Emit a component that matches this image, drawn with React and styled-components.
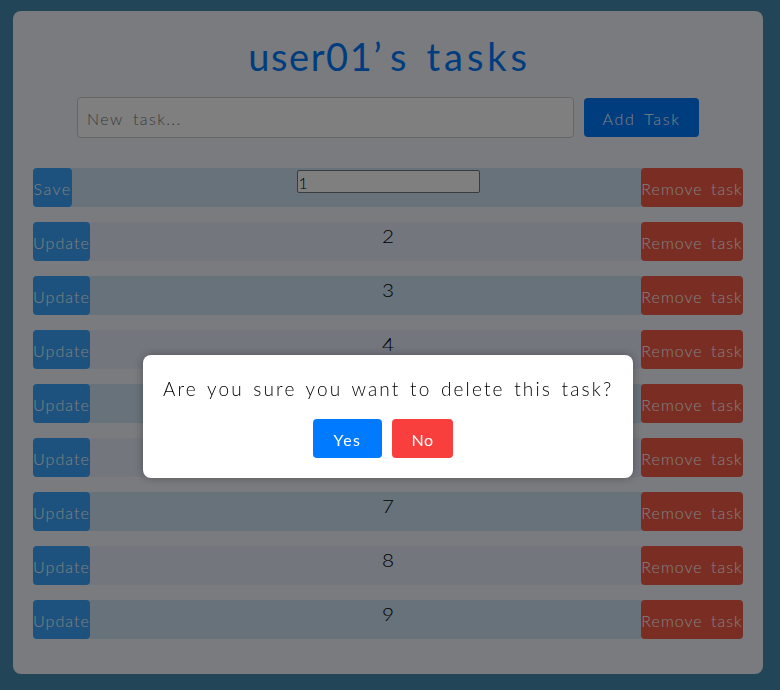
import React from "react";
import styled, { createGlobalStyle } from "styled-components";

const GlobalStyle = createGlobalStyle`
  * { box-sizing: border-box; }
  body {
    margin: 0;
    background: #468bb0;
    font-family: Lato, "Open Sans", sans-serif;
    font-weight: 300;
    overflow: hidden;
  }
  button, input { font: inherit; }
`;

const Page = styled.div`
  height: 690px;
  padding: 11px 17px 16px 13px;
`;

const Card = styled.main`
  height: 663px;
  padding: 20px;
  border-radius: 8px;
  background: #f5f7fc;
`;

const Title = styled.h1`
  display: flex;
  justify-content: center;
  height: 56px;
  margin: 0 0 10px;
  padding-left: 3px;
  color: #007bff;
  font-size: 38px;
  font-weight: 400;
  line-height: 50px;
  white-space: pre;
`;

const Owner = styled.span`
  letter-spacing: 1.6px;
`;

const Possessive = styled.span`
  margin: 0 20px 0 7px;
`;

const Subject = styled.span`
  letter-spacing: 3.9px;
`;

const TaskForm = styled.form`
  display: flex;
  align-items: center;
  gap: 10px;
  margin: 0 44px 30px;
`;

const NewTaskInput = styled.input`
  width: 497px;
  height: 41px;
  padding: 2px 9px 0;
  border: 1px solid #ccc;
  border-radius: 4px;
  background: #fff;
  font-size: 16px;
  letter-spacing: 1.4px;
  word-spacing: 4px;
  &::placeholder { color: #757575; opacity: 1; }
`;

const Button = styled.button`
  flex: none;
  display: flex;
  align-items: center;
  justify-content: center;
  width: ${(p) => p.$width}px;
  height: 39px;
  padding: 2px 0 0;
  border: 0;
  border-radius: 4px;
  background: ${(p) => p.$color};
  color: #fff;
  font-size: 16px;
  font-weight: ${(p) => p.$weight || 300};
  line-height: 20px;
  letter-spacing: ${(p) => p.$spacing || 1}px;
  word-spacing: 3px;
  white-space: nowrap;
`;

const TaskList = styled.ul`
  display: grid;
  gap: 15px;
  margin: 0;
  padding: 0;
  list-style: none;
`;

const TaskRow = styled.li`
  display: grid;
  grid-template-columns: 1fr auto 1fr;
  height: 39px;
  border-radius: 4px;
  background: #e8edfc;
  &:nth-child(odd) { background: #cfe4f4; }
  & > :last-child { justify-self: end; }
`;

const TaskName = styled.span`
  color: #000;
  font-size: 17px;
  line-height: 29px;
  transform: scaleX(1.22);
`;

const TaskInput = styled.input`
  width: 183px;
  height: 23px;
  margin-top: 2px;
  padding: 2px 1px 1px;
  border: 1px solid #767676;
  border-radius: 2px;
  background: #fff;
  font-size: 16px;
`;

const Overlay = styled.div`
  position: fixed;
  inset: 0;
  background: rgba(0, 0, 0, 0.5);
`;

const Dialog = styled.section`
  position: absolute;
  left: 143px;
  top: 355px;
  width: 490px;
  height: 123px;
  padding: 22px 20px 20px;
  border-radius: 8px;
  background: #fff;
  box-shadow: 0 0 10px rgba(0, 0, 0, 0.3);
`;

const Question = styled.p`
  margin: 0 0 18px;
  color: #000;
  font-size: 19px;
  line-height: 24px;
  letter-spacing: 2.15px;
  word-spacing: 2.2px;
  white-space: nowrap;
`;

const DialogActions = styled.div`
  display: flex;
  justify-content: center;
  gap: 10px;
  margin-right: 10px;
`;

const tasks = ["1", "2", "3", "4", "5", "6", "7", "8", "9"];

export default function App() {
  return (
    <>
      <GlobalStyle />
      <Page>
        <Card>
          <Title>
            <Owner>user01’</Owner>
            <Possessive>s</Possessive>
            <Subject>tasks</Subject>
          </Title>
          <TaskForm onSubmit={(e) => e.preventDefault()}>
            <NewTaskInput placeholder="New task..." />
            <Button $width={115} $color="#007bff" $spacing={1.7}>Add Task</Button>
          </TaskForm>
          <TaskList>
            {tasks.map((task, i) => (
              <TaskRow key={task}>
                <Button $width={i === 0 ? 39 : 57} $color="#38a4fa" $spacing={i === 0 ? 1.4 : 1.1}>
                  {i === 0 ? "Save" : "Update"}
                </Button>
                {i === 0 ? <TaskInput defaultValue={task} /> : <TaskName>{task}</TaskName>}
                <Button $width={102} $color="#f45a46">Remove task</Button>
              </TaskRow>
            ))}
          </TaskList>
        </Card>
      </Page>
      <Overlay>
        <Dialog role="dialog" aria-modal="true">
          <Question>Are you sure you want to delete this task?</Question>
          <DialogActions>
            <Button $width={69} $color="#007bff" $weight={400} $spacing={1.4}>Yes</Button>
            <Button $width={61} $color="#f93e3e" $weight={400} $spacing={0.4}>No</Button>
          </DialogActions>
        </Dialog>
      </Overlay>
    </>
  );
}
